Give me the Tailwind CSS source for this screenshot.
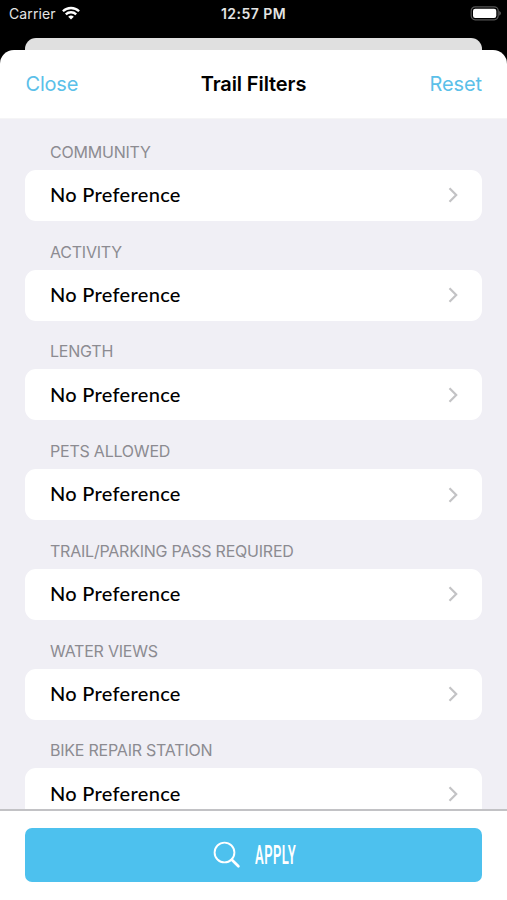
<!DOCTYPE html>
<html lang="en">
<head>
<meta charset="utf-8">
<title>Trail Filters</title>
<script src="https://cdn.jsdelivr.net/npm/@tailwindcss/browser@4"></script>
</head>
<body class="bg-black">
<div class="flex h-[900px] w-[507px] flex-col overflow-hidden bg-black font-['Inter',sans-serif]">
  <header class="grid h-[38px] shrink-0 grid-cols-3 items-start pt-1 text-[14px] leading-5 text-[#e4e4e4]">
    <div class="flex items-center gap-[6px] pl-[9px]">
      <span class="tracking-[0.1px]">Carrier</span>
      <svg class="-mt-[2px] h-[14px] w-[18px]" viewBox="0 0 18 14" fill="none" stroke="#fff" stroke-width="2.3"><path d="M.9 5.3a11.6 11.6 0 0 1 16.2 0M3.8 8.4a7.4 7.4 0 0 1 10.4 0"/><path d="M9 13.6 6.2 10.8a4 4 0 0 1 5.6 0Z" fill="#fff" stroke="none"/></svg>
    </div>
    <div class="text-center font-semibold tracking-[0.45px]">12:57 PM</div>
    <div class="flex justify-end pt-[2px] pr-[6px]">
      <svg class="h-[15px] w-[31px]" viewBox="0 0 31 15"><rect x="1.2" y=".8" width="27" height="13" rx="4" fill="none" stroke="#555" stroke-width="1.2"/><rect x="3" y="2.7" width="23.3" height="9.3" rx="2.2" fill="#fff"/><path d="M29.3 5v4.6c2-.8 2-3.8 0-4.6Z" fill="#666"/></svg>
    </div>
  </header>
  <div class="mx-[25px] h-3 shrink-0 rounded-t-[11px] bg-[#e0e0e0]"></div>
  <main class="flex min-h-0 flex-1 flex-col overflow-hidden rounded-t-[14px] bg-white">
    <nav class="grid h-[69px] shrink-0 grid-cols-3 items-center border-b border-[#f5f5f6] px-[25px] text-[20px] text-[#5bc0e9]">
      <span class="pl-[0.5px] tracking-[-0.2px]">Close</span>
      <h1 class="text-center font-semibold tracking-[-0.1px] whitespace-nowrap text-black">Trail Filters</h1>
      <span class="text-right tracking-[-0.1px]">Reset</span>
    </nav>
    <div id="filters" class="min-h-0 flex-1 overflow-hidden bg-[#f0eff5] px-[25px] pt-[2px]"></div>
    <footer class="h-[91px] shrink-0 border-t-2 border-[#c2c2c5] bg-white px-[25px] pt-[17px]">
      <button class="flex h-[54px] w-full items-center rounded-[7px] bg-[#4dc1ee] pl-[188px] text-white">
        <svg class="h-[28px] w-[28px] shrink-0" viewBox="0 0 28 28" fill="none" stroke="#fff" stroke-linecap="round"><circle cx="11.5" cy="11.5" r="9.9" stroke-width="1.9"/><path d="m18.8 18.8 6.6 6.4" stroke-width="2.7"/></svg>
        <span class="ml-[14px] origin-left scale-x-[0.5] font-['Roboto',sans-serif] text-[26px] leading-none font-semibold tracking-[1px]">APPLY</span>
      </button>
    </footer>
  </main>
</div>
<template id="row">
  <section>
    <h2 class="flex h-[48.75px] items-end pb-[7px] pl-[25px] text-[16px] leading-[22px] tracking-[-0.22px] text-[#8c8b91]"></h2>
    <div class="flex h-[51px] items-center justify-between rounded-[11px] bg-white pr-[24px] pl-[25px]">
      <span class="pb-[2.5px] font-['Lato',sans-serif] text-[20px] font-medium tracking-[0.3px] text-black">No Preference</span>
      <svg class="h-4 w-[10px]" viewBox="0 0 10 16" fill="none" stroke="#c3c3c5" stroke-width="2.2"><path d="m1.5 1.3 6.7 6.7-6.7 6.7"/></svg>
    </div>
  </section>
</template>
<script>
const list = document.getElementById('filters');
const row = document.getElementById('row');
['COMMUNITY', 'ACTIVITY', 'LENGTH', 'PETS ALLOWED', 'TRAIL/PARKING PASS REQUIRED', 'WATER VIEWS', 'BIKE REPAIR STATION'].forEach(name => {
  const item = row.content.cloneNode(true);
  item.querySelector('h2').textContent = name;
  list.append(item);
});
</script>
</body>
</html>
